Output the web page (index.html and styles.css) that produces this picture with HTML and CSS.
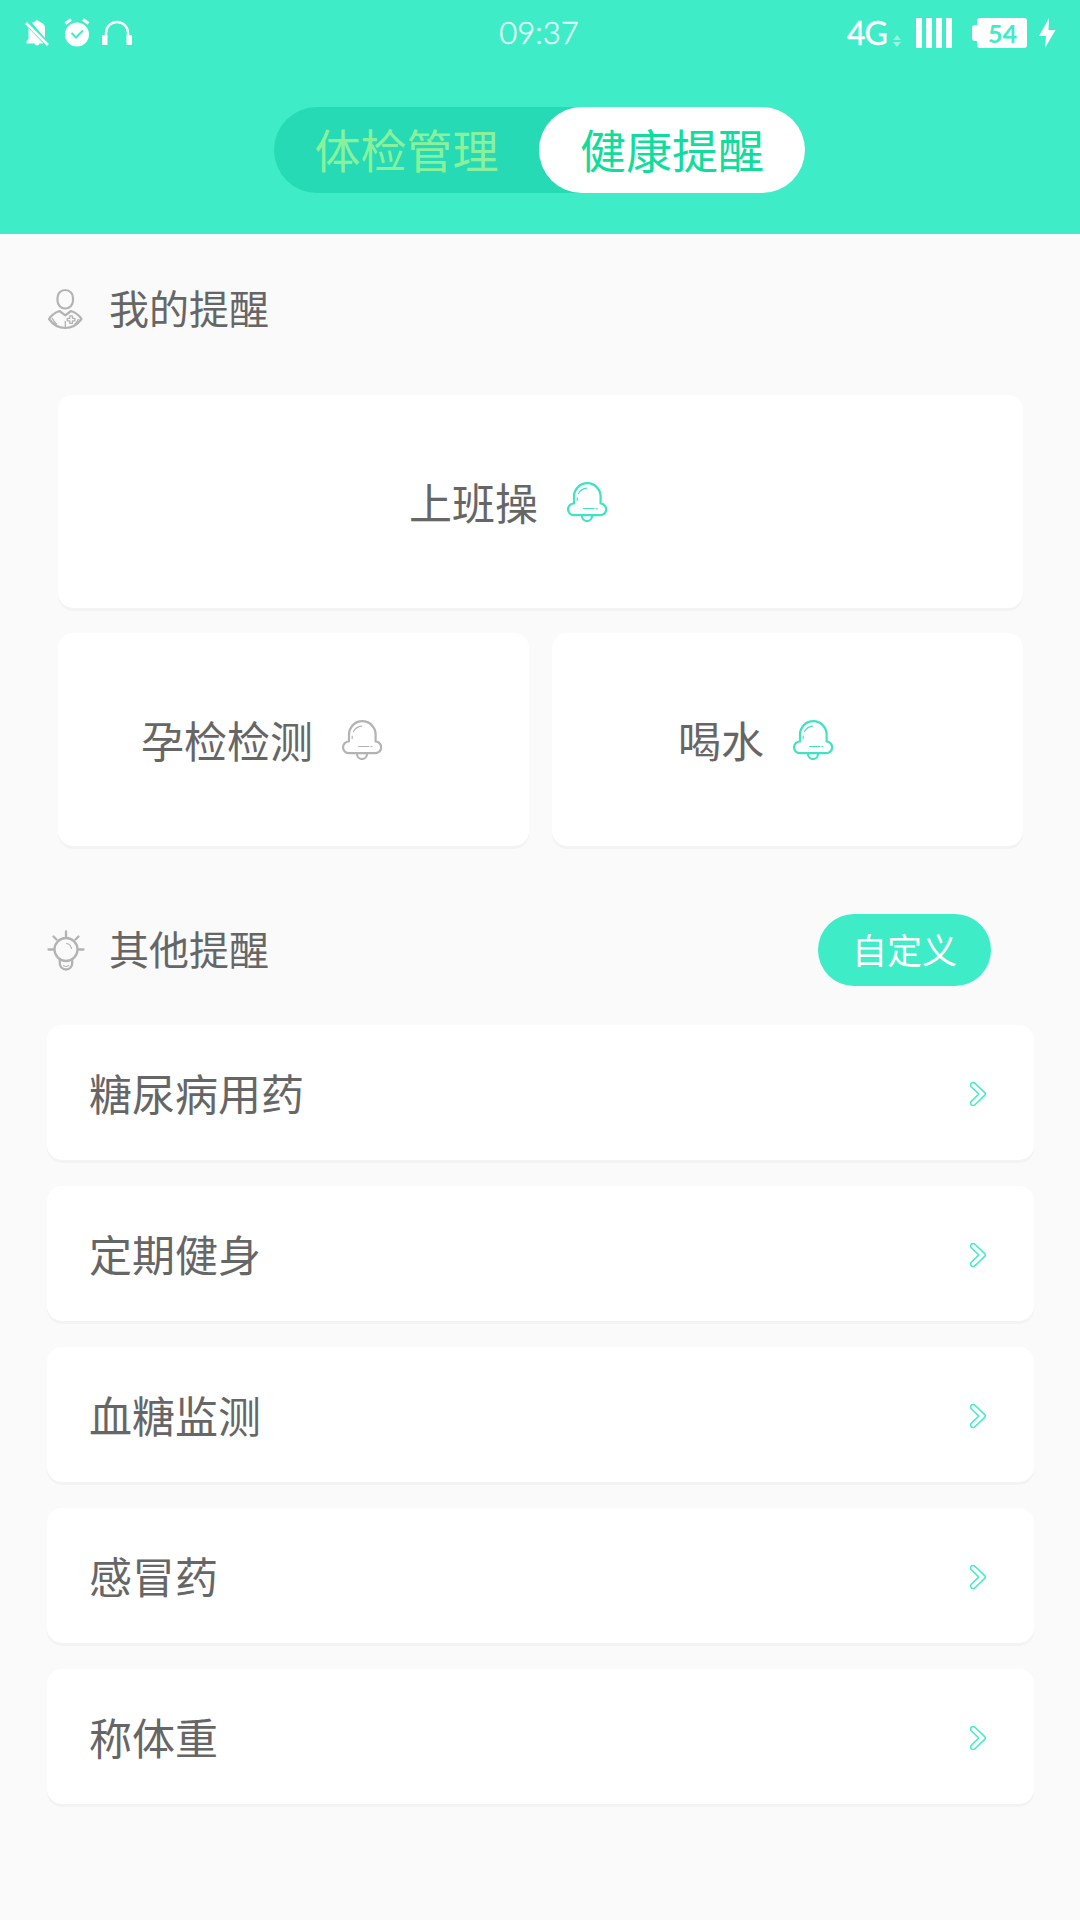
FILE: index.html
```html
<!DOCTYPE html>
<html lang="zh-CN">
<head>
  <meta charset="UTF-8" />
  <meta name="viewport" content="width=device-width, initial-scale=1.0"/>
  <title>健康提醒</title>
  <link rel="stylesheet" href="styles.css">
</head>
<body>

<svg class="sprite" width="0" height="0">
  <symbol id="bell" viewBox="0 0 40 40">
    <g fill="none" stroke="currentColor" stroke-width="2.2" stroke-linecap="round" stroke-linejoin="round">
      <path d="M7 21.500V14.500a13.300 13.300 0 0 1 26.600 0V21.500a5.800 5.800 0 0 1-.5 11.700H6.800A5.800 5.800 0 0 1 7 21.500z"/>
      <path d="M15 33.500v.5a5 5 0 0 0 10 0v-.5"/>
      <path stroke-width="1.200" d="M11.500 11.500q3-5 8-5.300M10.200 16v2.500M16.500 26.500h10.500M29 26.500h1"/>
    </g>
  </symbol>
  <symbol id="chevron" viewBox="0 0 16 24">
    <path fill="none" stroke="currentColor" stroke-width="1.500" stroke-linejoin="round" d="M1.300 4.800L8.800 12 1.300 19.200a2.500 2.500 0 0 0 3.600 3.500l9.800-9.300q1.200-1.400 0-2.800L4.900 1.300a2.500 2.500 0 0 0-3.600 3.500z"/>
  </symbol>
</svg>

<header>
  <div class="status">
    <div class="status-left">
      <svg class="mute" width="24" height="28" viewBox="0 0 24 28">
        <path fill="#fff" d="M3 8.500L18.500 24.500h-4q-.5 2-2.500 2t-2.500-2H1.500V22L3.500 20V9zM7 4l3.500-2q1-2 3 0l5 3 1.500 3v11z"/>
        <path stroke="#fff" stroke-width="2.500" d="M1 4l22 22"/>
      </svg>
      <svg class="alarm" width="26" height="30" viewBox="0 0 26 30">
        <circle cx="13" cy="16.500" r="12" fill="#fff"/>
        <path stroke="#fff" stroke-width="3" d="M1.500 5.500l5.500-4M24.500 5.500L19 1.500"/>
        <path fill="none" stroke="#3eedc7" stroke-width="2" d="M7.500 15l4.500 4.500 7-7"/>
      </svg>
      <svg class="phones" width="30" height="26" viewBox="0 0 30 26">
        <path fill="none" stroke="#fff" stroke-width="2.400" d="M4 17v-4a11 11 0 0 1 22 0v4"/>
        <path fill="#fff" d="M0 16q0-1 1-1h4.500v10H1q-1 0-1-1zM24.500 15H29q1 0 1 1v8q0 1-1 1h-4.500z"/>
      </svg>
    </div>
    <div class="time">09:37</div>
    <div class="status-right">
      <span class="net">4G</span>
      <svg class="data" width="8" height="12" viewBox="0 0 8 12">
        <path fill="#fff" opacity=".45" d="M0 5l4-5 4 5zM0 7h8l-4 5z"/>
      </svg>
      <div class="signal"><i></i><i></i><i></i><i></i></div>
      <div class="battery">54</div>
      <svg class="bolt" width="17" height="30" viewBox="0 0 17 30">
        <path fill="#fff" d="M10 0L0 18h7L6 30 16.500 12H9.500z"/>
      </svg>
    </div>
  </div>
  <div class="tabs">
    <div class="tab">体检管理</div>
    <div class="tab active">健康提醒</div>
  </div>
</header>

<section>
  <div class="title">
    <svg width="38" height="42" viewBox="0 0 38 42" fill="none" stroke="#b3b3b3" stroke-width="2.200">
      <rect x="10.500" y="2" width="15.500" height="18.500" rx="7.700"/>
      <path stroke-linejoin="round" d="M12.500 23l5.800 4.300L24 23q7 2.500 10.500 8-6.500 9-16.300 9T2 31Q5.500 25.500 12.500 23z"/>
      <path stroke-width="1.300" d="M5 30q2 4 5 6.500M31.500 31q-1.500 3.500-4 5.500M18.300 33v7"/>
      <path stroke-width="1.300" stroke-linejoin="round" d="M22.800 27.800h2.600v2.500h2.500v2.600h-2.500v2.500h-2.600v-2.500h-2.500v-2.600h2.500z"/>
    </svg>
    <h2>我的提醒</h2>
  </div>

  <div class="mine">
    <div class="card wide"><span>上班操</span><svg class="bell"><use href="#bell"/></svg></div>
    <div class="card"><span>孕检检测</span><svg class="bell off"><use href="#bell"/></svg></div>
    <div class="card"><span>喝水</span><svg class="bell"><use href="#bell"/></svg></div>
  </div>
</section>

<section>
  <div class="title other">
    <svg width="38" height="42" viewBox="0 0 38 42" fill="none" stroke="#b3b3b3" stroke-width="2.300" stroke-linecap="round">
      <circle cx="19" cy="20.500" r="11.500"/>
      <path d="M19 2.500v5M6.500 7.500l3 3M31.500 7.500l-3 3M1.500 20.500h4.500M32 20.500h4.500M12.800 30.500v4a6.200 6 0 0 0 12.400 0v-4"/>
      <path stroke-width="1.200" d="M19.500 14.500q4 .5 5 5M16.500 36.500q2.500 2 5 0"/>
    </svg>
    <h2>其他提醒</h2>
    <div class="custom">自定义</div>
  </div>

  <div class="list">
    <div class="row"><span>糖尿病用药</span><svg class="chevron"><use href="#chevron"/></svg></div>
    <div class="row"><span>定期健身</span><svg class="chevron"><use href="#chevron"/></svg></div>
    <div class="row"><span>血糖监测</span><svg class="chevron"><use href="#chevron"/></svg></div>
    <div class="row"><span>感冒药</span><svg class="chevron"><use href="#chevron"/></svg></div>
    <div class="row"><span>称体重</span><svg class="chevron"><use href="#chevron"/></svg></div>
  </div>
</section>

</body>
</html>
```
FILE: styles.css
```css
* {
  box-sizing: border-box;
}

body {
  margin: 0;
  height: 1920px;
  background: #fafafa;
  color: #666;
  font-family: "Noto Sans CJK SC", sans-serif;
  overflow: hidden;
}

svg {
  display: block;
  flex-shrink: 0;
}

.sprite {
  display: none;
}

header {
  height: 234px;
  background: #3eedc7;
}

/* status bar */
.status {
  display: grid;
  grid-template-columns: 1fr auto 1fr;
  align-items: center;
  height: 66px;
  padding: 0 24px 0 25px;
  color: #fff;
  font-family: Lato, sans-serif;
}

.status-left, .status-right {
  display: flex;
  align-items: center;
}

.status-right {
  justify-content: flex-end;
}

.alarm {
  margin-left: 15px;
}

.phones {
  margin-left: 12px;
}

.time {
  padding: 0 3px 2px 0;
  color: #e4fcf6;
  font-size: 31px;
  font-weight: 300;
  line-height: 64px;
  -webkit-text-stroke: 0.5px #e4fcf6;
}

.net {
  padding-bottom: 1px;
  font-size: 32px;
  line-height: 64px;
  letter-spacing: -1px;
  -webkit-text-stroke: 0.4px #fff;
}

.data {
  margin: 16px 15px 0 6px;
}

.signal {
  display: flex;
  gap: 4px;
}

.signal i {
  width: 6px;
  height: 30px;
  background: #fff;
}

.battery {
  display: flex;
  align-items: center;
  justify-content: center;
  width: 50px;
  height: 30px;
  margin: 0 12px 0 25px;
  padding-bottom: 1px;
  border-radius: 3px;
  background: #fff;
  color: #3eedc7;
  font-size: 25px;
  font-weight: 700;
}

.battery::before {
  content: "";
  width: 6px;
  height: 16px;
  margin-left: -15px;
  margin-right: 10px;
  border-radius: 3px 0 0 3px;
  background: #fff;
}

/* tabs */
.tabs {
  display: flex;
  width: 531px;
  height: 86px;
  margin: 41px 0 0 274px;
  border-radius: 43px;
  background: #25dab4;
}

.tab {
  width: 265px;
  color: #89f19c;
  font-size: 46px;
  line-height: 82px;
  text-align: center;
}

.tab.active {
  width: 266px;
  border-radius: 43px;
  background: #fff;
  color: #10dd9c;
}

/* sections */
.title {
  display: flex;
  align-items: center;
  height: 72px;
  margin: 39px 89px 0 47px;
}

.title h2 {
  margin: 0 0 0 24px;
  padding-bottom: 3px;
  font-size: 40px;
  font-weight: 400;
  line-height: 69px;
}

.title.other {
  margin-top: 68px;
}

.custom {
  width: 173px;
  height: 72px;
  margin-left: auto;
  border-radius: 36px;
  background: #3eedc7;
  color: #fff;
  font-size: 35px;
  line-height: 69px;
  text-align: center;
}

.mine {
  display: grid;
  grid-template-columns: 1fr 1fr;
  gap: 25px 23px;
  margin: 50px 57px 0 58px;
}

.card {
  display: flex;
  align-items: center;
  justify-content: center;
  height: 213px;
  padding-right: 64px;
  border-radius: 15px;
  background: #fff;
  box-shadow: 0 3px 0 #f3f3f3;
  font-size: 43px;
}

.card span {
  padding-bottom: 1px;
}

.card.wide {
  grid-column: span 2;
  padding-right: 65px;
}

.bell {
  width: 40px;
  height: 40px;
  margin-left: 29px;
  color: #3fe3c1;
}

.bell.off {
  color: #b3b3b3;
}

.list {
  display: flex;
  flex-direction: column;
  gap: 26px;
  margin: 39px 46px 0 47px;
}

.row {
  display: flex;
  align-items: center;
  justify-content: space-between;
  height: 135px;
  padding: 1px 48px 0 42px;
  border-radius: 15px;
  background: #fff;
  box-shadow: 0 3px 0 #f3f3f3;
  font-size: 43px;
}

.row span {
  padding-bottom: 2px;
}

.chevron {
  width: 16px;
  height: 24px;
  margin-top: 1px;
  color: #3eedc7;
}
```
